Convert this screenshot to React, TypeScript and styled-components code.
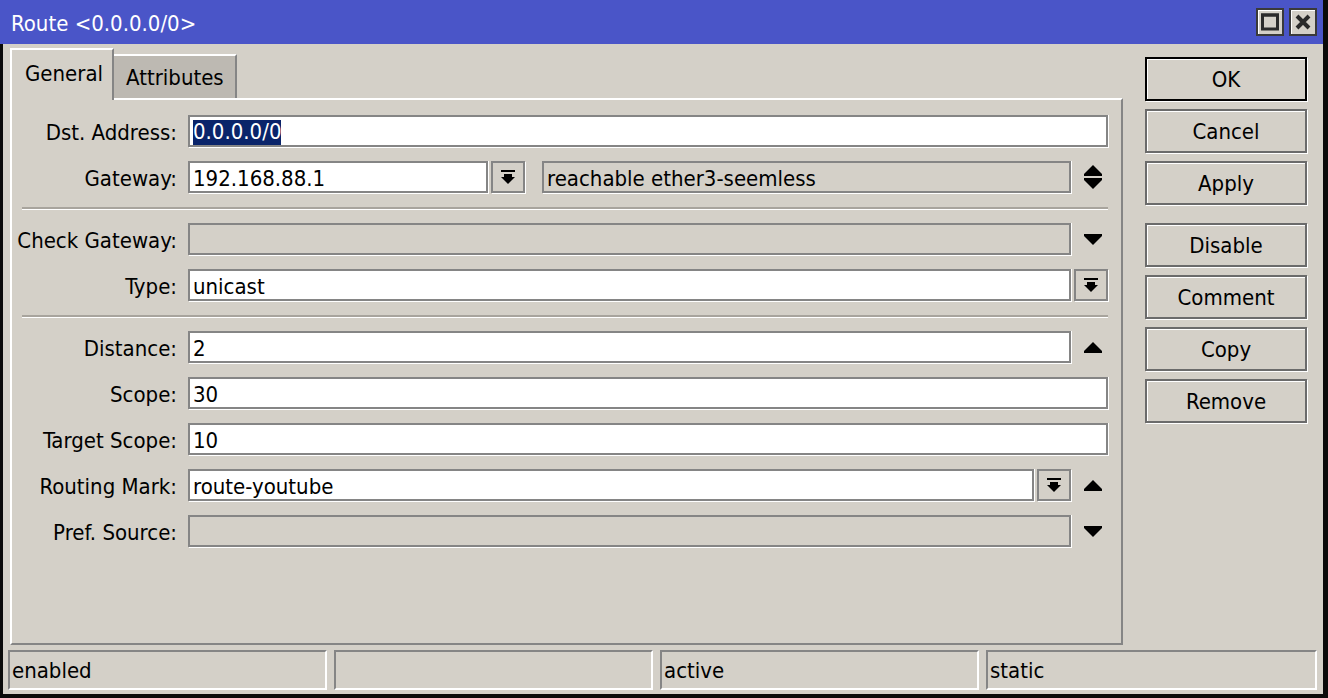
import React from 'react';
import styled, { createGlobalStyle } from 'styled-components';

const GlobalStyle = createGlobalStyle`
  html, body {
    margin: 0;
    padding: 0;
    background: #d4d0c8;
  }
  body {
    font-family: "DejaVu Sans Condensed", "DejaVu Sans", sans-serif;
    font-stretch: condensed;
    font-size: 22px;
    color: #000;
  }
`;

const Window = styled.div`
  width: 1328px;
  height: 698px;
  box-sizing: border-box;
  display: flex;
  flex-direction: column;
  background: #d4d0c8;
  border-right: 5px solid #0a0a0a;
  border-bottom: 4px solid #0a0a0a;
`;

const TitleBar = styled.div`
  height: 44px;
  flex: none;
  display: flex;
  align-items: center;
  justify-content: space-between;
  background: #4a55c8;
  color: #fff;
  padding: 0 6px 0 11px;
`;

const TitleText = styled.span`
  line-height: 1;
  margin-top: 4px;
`;

const TitleButtons = styled.div`
  display: flex;
  gap: 5px;
`;

const TitleButton = styled.div`
  width: 28px;
  height: 28px;
  box-sizing: border-box;
  background: #d4d0c8;
  border: 2px solid #3a3a3a;
  box-shadow: inset 1px 1px 0 #fff;
  display: flex;
  align-items: center;
  justify-content: center;
`;

const Body = styled.div`
  flex: 1;
  display: flex;
  flex-direction: column;
  border-left: 3px solid #0a0a0a;
  min-height: 0;
`;

const Main = styled.div`
  flex: 1;
  display: flex;
  min-height: 0;
  padding: 4px 0 0 7px;
`;

const TabArea = styled.div`
  width: 1113px;
  display: flex;
  flex-direction: column;
`;

const TabStrip = styled.div`
  height: 50px;
  display: flex;
  align-items: flex-end;
  position: relative;
  z-index: 1;
`;

const Tab = styled.div<{ $active?: boolean }>`
  box-sizing: border-box;
  height: ${({ $active }) => ($active ? '52px' : '44px')};
  margin-bottom: ${({ $active }) => ($active ? '-2px' : '0')};
  padding: ${({ $active }) => ($active ? '0 9px 2px 13px' : '2px 11px 0 12px')};
  background: ${({ $active }) => ($active ? '#d4d0c8' : '#bdb9b2')};
  border-top: 2px solid #fff;
  border-left: ${({ $active }) => ($active ? '2px solid #fff' : 'none')};
  border-right: 2px solid #858585;
  display: flex;
  align-items: center;
  line-height: 1;
  white-space: nowrap;
`;

const Panel = styled.div`
  flex: 1;
  box-sizing: border-box;
  border-top: 2px solid #fff;
  border-left: 2px solid #fff;
  border-right: 2px solid #858585;
  border-bottom: 2px solid #858585;
  padding: 8px 13px 0 0;
`;

const FormRow = styled.div`
  height: 46px;
  display: flex;
  align-items: center;
`;

const Label = styled.div`
  width: 165px;
  margin-right: 11px;
  padding-top: 3px;
  flex: none;
  text-align: right;
  white-space: nowrap;
  line-height: 1;
`;

const Field = styled.div<{ $disabled?: boolean; $width?: number; $gapLeft?: number }>`
  box-sizing: border-box;
  height: 32px;
  ${({ $width }) => ($width ? `width: ${$width}px; flex: none;` : 'flex: 1;')}
  margin-left: ${({ $gapLeft }) => $gapLeft ?? 0}px;
  background: ${({ $disabled }) => ($disabled ? '#d4d0c8' : '#fff')};
  border: 2px solid #858585;
  box-shadow: 1px 1px 0 #fff, 1px 0 0 #fff;
  padding: 3px 3px 0;
  display: flex;
  align-items: center;
  white-space: nowrap;
  overflow: hidden;
  line-height: 1;
`;

const Selected = styled.span`
  background: #0a246a;
  color: #fff;
  padding: 1px 0 2px;
`;

const DropButton = styled.div`
  box-sizing: border-box;
  width: 34px;
  height: 32px;
  flex: none;
  margin-left: 3px;
  border: 2px solid #858585;
  box-shadow: 1px 1px 0 #fff;
  display: flex;
  align-items: center;
  justify-content: center;
`;

const Trailing = styled.div`
  width: 37px;
  height: 32px;
  flex: none;
  box-sizing: border-box;
  padding-left: 6px;
  display: flex;
  align-items: center;
  justify-content: center;
`;

const Separator = styled.div`
  height: 16px;
  display: flex;
  align-items: center;
  margin-left: 10px;

  &::before {
    content: '';
    flex: 1;
    height: 2px;
    background: #a8a49d;
    border-bottom: 1px solid #fff;
  }
`;

const SideColumn = styled.div`
  width: 162px;
  margin: 9px 0 0 22px;
  display: flex;
  flex-direction: column;
  gap: 8px;
`;

const ActionButton = styled.div<{ $default?: boolean; $spaced?: boolean }>`
  box-sizing: border-box;
  height: 44px;
  margin-top: ${({ $spaced }) => ($spaced ? '10px' : '0')};
  padding-top: 2px;
  border: 2px solid ${({ $default }) => ($default ? '#000' : '#6b6b6b')};
  box-shadow: inset 1px 1px 0 #fff, 1px 1px 0 #fff;
  display: flex;
  align-items: center;
  justify-content: center;
  line-height: 1;
`;

const StatusBar = styled.div`
  height: 40px;
  flex: none;
  display: flex;
  gap: 7px;
  padding: 5px 6px 4px 5px;
`;

const StatusCell = styled.div<{ $width: number }>`
  box-sizing: border-box;
  width: ${({ $width }) => $width}px;
  height: 40px;
  border-top: 2px solid #858585;
  border-left: 2px solid #858585;
  border-right: 2px solid #fff;
  border-bottom: 2px solid #fff;
  padding: 2px 0 0 2px;
  display: flex;
  align-items: center;
  line-height: 1;
`;

const DropIcon = () => (
  <svg width="14" height="14" viewBox="0 0 14 14" fill="#000">
    <rect x="0" y="0" width="14" height="2" />
    <rect x="3" y="4" width="8" height="3" />
    <polygon points="0,7 14,7 7,14" />
  </svg>
);

const UpIcon = () => (
  <svg width="18" height="11" viewBox="0 0 18 11" fill="#000">
    <polygon points="9,0 18,9 18,11 0,11 0,9" />
  </svg>
);

const DownIcon = () => (
  <svg width="18" height="11" viewBox="0 0 18 11" fill="#000">
    <polygon points="0,0 18,0 18,2 9,11 0,2" />
  </svg>
);

const UpDownIcon = () => (
  <svg width="18" height="24" viewBox="0 0 18 24" fill="#000">
    <polygon points="9,0 18,9 18,11 0,11 0,9" />
    <polygon points="0,13 18,13 18,15 9,24 0,15" />
  </svg>
);

const MaxIcon = () => (
  <svg width="18" height="18" viewBox="0 0 18 18">
    <rect x="1.5" y="2" width="15" height="14" fill="none" stroke="#2a2a2a" strokeWidth="3" />
    <rect x="0" y="0.5" width="18" height="3" fill="#2a2a2a" />
  </svg>
);

const CloseIcon = () => (
  <svg width="16" height="16" viewBox="0 0 16 16">
    <path d="M2 2 L14 14 M14 2 L2 14" stroke="#2a2a2a" strokeWidth="4" />
  </svg>
);

const buttons = ['OK', 'Cancel', 'Apply', 'Disable', 'Comment', 'Copy', 'Remove'];

const statusCells = [
  { text: 'enabled', width: 319 },
  { text: '', width: 319 },
  { text: 'active', width: 319 },
  { text: 'static', width: 331 },
];

export default function App() {
  return (
    <>
      <GlobalStyle />
      <Window>
        <TitleBar>
          <TitleText>Route &lt;0.0.0.0/0&gt;</TitleText>
          <TitleButtons>
            <TitleButton>
              <MaxIcon />
            </TitleButton>
            <TitleButton>
              <CloseIcon />
            </TitleButton>
          </TitleButtons>
        </TitleBar>
        <Body>
          <Main>
            <TabArea>
              <TabStrip>
                <Tab $active>General</Tab>
                <Tab>Attributes</Tab>
              </TabStrip>
              <Panel>
                <FormRow>
                  <Label>Dst. Address:</Label>
                  <Field>
                    <Selected>0.0.0.0/0</Selected>
                  </Field>
                </FormRow>
                <FormRow>
                  <Label>Gateway:</Label>
                  <Field $width={300}>192.168.88.1</Field>
                  <DropButton>
                    <DropIcon />
                  </DropButton>
                  <Field $disabled $gapLeft={17}>
                    reachable ether3-seemless
                  </Field>
                  <Trailing>
                    <UpDownIcon />
                  </Trailing>
                </FormRow>
                <Separator />
                <FormRow>
                  <Label>Check Gateway:</Label>
                  <Field $disabled />
                  <Trailing>
                    <DownIcon />
                  </Trailing>
                </FormRow>
                <FormRow>
                  <Label>Type:</Label>
                  <Field>unicast</Field>
                  <DropButton>
                    <DropIcon />
                  </DropButton>
                </FormRow>
                <Separator />
                <FormRow>
                  <Label>Distance:</Label>
                  <Field>2</Field>
                  <Trailing>
                    <UpIcon />
                  </Trailing>
                </FormRow>
                <FormRow>
                  <Label>Scope:</Label>
                  <Field>30</Field>
                </FormRow>
                <FormRow>
                  <Label>Target Scope:</Label>
                  <Field>10</Field>
                </FormRow>
                <FormRow>
                  <Label>Routing Mark:</Label>
                  <Field>route-youtube</Field>
                  <DropButton>
                    <DropIcon />
                  </DropButton>
                  <Trailing>
                    <UpIcon />
                  </Trailing>
                </FormRow>
                <FormRow>
                  <Label>Pref. Source:</Label>
                  <Field $disabled />
                  <Trailing>
                    <DownIcon />
                  </Trailing>
                </FormRow>
              </Panel>
            </TabArea>
            <SideColumn>
              {buttons.map((b) => (
                <ActionButton key={b} $default={b === 'OK'} $spaced={b === 'Disable'}>
                  {b}
                </ActionButton>
              ))}
            </SideColumn>
          </Main>
          <StatusBar>
            {statusCells.map((c, i) => (
              <StatusCell key={i} $width={c.width}>
                {c.text}
              </StatusCell>
            ))}
          </StatusBar>
        </Body>
      </Window>
    </>
  );
}
